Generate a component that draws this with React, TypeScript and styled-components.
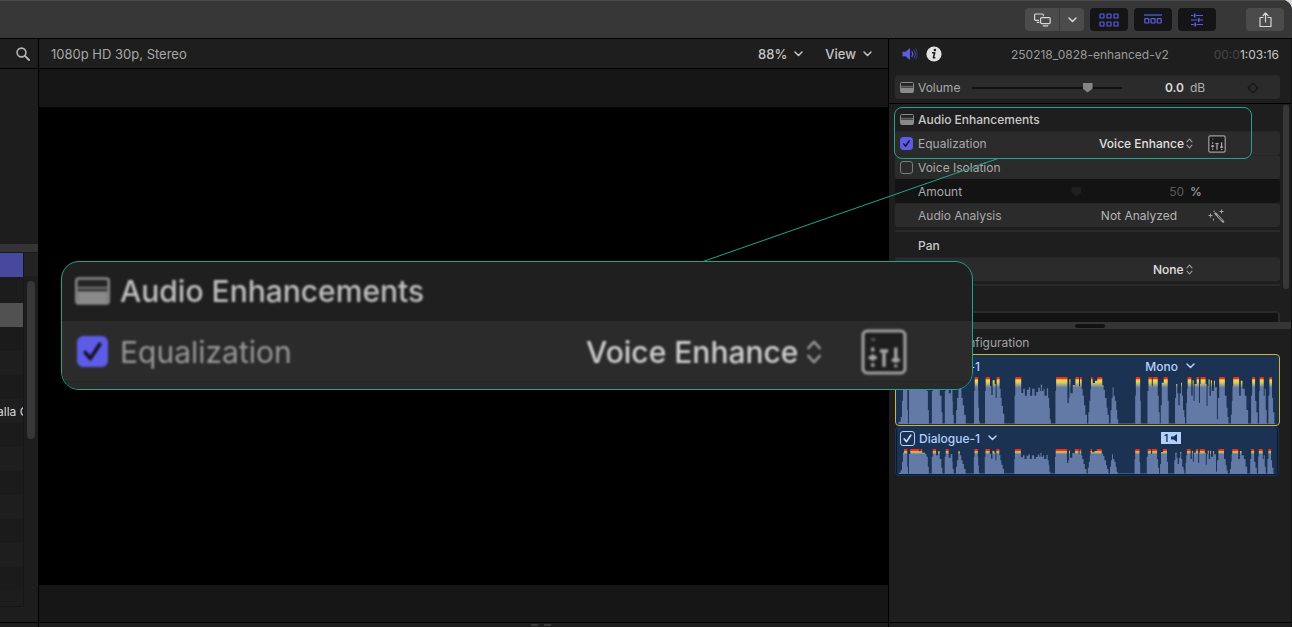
import React from "react";
import styled, { createGlobalStyle, css } from "styled-components";

const ACCENT = "#5e5ce6";
const TEAL = "#1fa58d";
const FONT = 'Inter, "Liberation Sans", sans-serif';

const GlobalStyle = createGlobalStyle`
  *, *::before, *::after { box-sizing: border-box; }
  body { margin: 0; background: #d9d7e2; font-family: ${FONT}; font-size: 12px; color: #b9b9b9; }
  button, input, select { font: inherit; color: inherit; margin: 0; padding: 0; border: 0; background: none; }
  svg { display: block; flex: none; }
`;

/* ---------- window frame ---------- */

const Window = styled.div`
  position: relative;
  display: flex;
  flex-direction: column;
  min-height: 100vh;
  overflow: hidden;
  background: #1e1e1e;
  border-top-right-radius: 10px;
`;

const Toolbar = styled.header`
  display: flex;
  align-items: center;
  justify-content: flex-end;
  gap: 6px;
  height: 39px;
  padding: 0 8px;
  background: #373737;
  border-top: 1px solid #4c4c4c;
  border-bottom: 1px solid #000;
`;

const ToolButton = styled.button<{ $active?: boolean; $width?: number }>`
  display: flex;
  align-items: center;
  justify-content: center;
  width: ${(p) => p.$width ?? 38}px;
  height: 23px;
  border-radius: 4px;
  color: ${(p) => (p.$active ? ACCENT : "#d6d6d6")};
  background: ${(p) => (p.$active ? "#151517" : "#4b4b4b")};
`;

const ButtonGroup = styled.div`
  display: flex;
  gap: 1px;
  border-radius: 4px;
  overflow: hidden;
  background: #3a3a3a;

  ${ToolButton} { border-radius: 0; }
`;

const ShareSlot = styled.div`
  margin-left: 24px;
`;

const Body = styled.div`
  flex: 1;
  display: flex;
`;

const PaneHeader = styled.div`
  display: flex;
  align-items: center;
  height: 30px;
  border-bottom: 1px solid #000;
  background: #1e1e1e;
`;

const Footer = styled.div`
  height: 5px;
  border-top: 1px solid #000;
  background: #1e1e1e;
`;

/* ---------- browser sliver on the left ---------- */

const Browser = styled.aside`
  display: flex;
  flex-direction: column;
  flex: none;
  width: 39px;
  border-right: 1px solid #000;
  background: #1d1d1d;
`;

const SearchHeader = styled(PaneHeader)`
  justify-content: flex-end;
  padding-right: 7px;
`;

const IconButton = styled.button`
  display: flex;
  align-items: center;
  justify-content: center;
`;

const Filmstrip = styled.div`
  height: 175px;
`;

const Splitter = styled.div`
  height: 9px;
  border-bottom: 1px solid #1a1a1a;
  background: #343434;
`;

const ListArea = styled.div`
  flex: 1;
  display: flex;
  padding-bottom: 15px;
`;

const List = styled.div`
  width: 24px;
  overflow: hidden;
  border-right: 1px solid #161616;
  border-bottom: 1px solid #161616;
`;

const ListRow = styled.div<{ $tone?: string }>`
  height: 24px;
  line-height: 26px;
  text-indent: -3px;
  white-space: nowrap;
  color: #d8d8d8;
  background: #1b1b1b;

  &:nth-child(odd) { background: #1e1e1e; }

  ${(p) => p.$tone && css`&&& { background: ${p.$tone}; }`}
`;

const ListGap = styled.div`
  height: 26px;
  background: #1c1c1c;
`;

const ListScroll = styled.div`
  flex: 1;
  padding: 5px 0 0 3px;
  border-top: 23px solid #232323;
`;

const ScrollThumb = styled.div<{ $width: number; $height: number }>`
  width: ${(p) => p.$width}px;
  height: ${(p) => p.$height}px;
  border-radius: 4px;
  background: #373737;
`;

/* ---------- viewer ---------- */

const Viewer = styled.main`
  flex: 1;
  display: flex;
  flex-direction: column;
  border-right: 1px solid #000;
`;

const ViewerHeader = styled(PaneHeader)`
  gap: 22px;
  padding: 0 16px 0 12px;
`;

const ClipFormat = styled.div`
  flex: 1;
  font-size: 13px;
  color: #a8a8a8;
`;

const MenuButton = styled.button`
  display: flex;
  align-items: center;
  gap: 7px;
  font-size: 13px;
  font-weight: 500;
  color: #c4c4c4;
`;

const Stage = styled.div`
  flex: 1;
  display: flex;
  padding: 38px 0 37px;
  background: #161616;
`;

const Canvas = styled.div`
  flex: 1;
  background: #000;
`;

const ViewerFooter = styled(Footer)`
  display: flex;
  justify-content: center;
  gap: 6px;
  padding: 1px 0 0 154px;
`;

const Tick = styled.span`
  width: 7px;
  height: 2px;
  background: #3a3a3a;
`;

/* ---------- inspector ---------- */

const Inspector = styled.aside`
  position: relative;
  display: flex;
  flex-direction: column;
  flex: none;
  width: 403px;
  border-right: 1px solid #121212;
`;

const InspectorHeader = styled.div`
  display: flex;
  align-items: center;
  gap: 8px;
  height: 30px;
  padding: 0 12px 0 13px;
`;

const ClipName = styled.div`
  flex: 1;
  padding-left: 24px;
  text-align: center;
  color: #9b9b9b;
`;

const TimeCode = styled.div`
  color: #c8c8c8;
  span { color: #454545; }
`;

const VolumeSection = styled.div`
  padding: 6px 11px 4px 6px;
  border-bottom: 1px solid #000;
`;

const ScrollRegion = styled.div`
  display: flex;
  height: 218px;
  overflow: hidden;
`;

const Rows = styled.div`
  flex: 1;
  padding: 3px 3px 0 6px;
`;

const Row = styled.div<{ $tone?: "plain" | "raised" | "sunken" }>`
  display: flex;
  align-items: center;
  height: 24px;
  border-radius: 3px;
  background: ${(p) =>
    p.$tone === "raised" ? "#2b2b2b" : p.$tone === "sunken" ? "#131313" : "transparent"};
  border-top: 1px solid ${(p) => (p.$tone === "raised" ? "#262626" : "transparent")};
`;

const Lead = styled.div`
  width: 23px;
  padding-left: 5px;
`;

const Label = styled.label`
  width: 54px;
  white-space: nowrap;
  color: #a9a9a9;
`;

const Heading = styled.h3`
  margin: 0;
  font-size: 12px;
  font-weight: 500;
  color: #c9c9c9;
`;

const Value = styled.div`
  flex: 1;
  display: flex;
  justify-content: flex-end;
`;

const Unit = styled.div`
  width: 24px;
  padding-left: 6px;
  color: #b0b0b0;
`;

const Action = styled.div`
  display: flex;
  width: 72px;
`;

const KeyframeAction = styled(Action)`
  padding-left: 39px;
`;

const NumberInput = styled.input<{ $dim?: boolean }>`
  width: 36px;
  text-align: right;
  font-weight: ${(p) => (p.$dim ? 400 : 600)};
  color: ${(p) => (p.$dim ? "#5b5b5b" : "#dcdcdc")};
`;

const Range = styled.input<{ $faint?: boolean }>`
  appearance: none;
  width: 150px;
  height: 12px;

  &::-webkit-slider-runnable-track {
    height: 10px;
    background: linear-gradient(${(p) => (p.$faint ? "#131313" : "#111")}, ${(p) => (p.$faint ? "#131313" : "#111")})
      center / 100% 2px no-repeat;
  }
  &::-webkit-slider-thumb {
    appearance: none;
    width: 10px;
    height: 10px;
    background: ${(p) => (p.$faint ? "#1f1f1f" : "#858585")};
    clip-path: polygon(10% 0, 90% 0, 100% 10%, 100% 60%, 50% 100%, 0 60%, 0 10%);
  }
`;

const Popup = styled.div<{ $large?: boolean }>`
  display: flex;
  align-items: center;
  gap: ${(p) => (p.$large ? 7 : 2)}px;
  margin-right: ${(p) => (p.$large ? 39 : 15)}px;
  color: ${(p) => (p.$large ? "#999" : "#a0a0a0")};

  select {
    appearance: none;
    font-weight: 500;
    color: ${(p) => (p.$large ? "#d0d0d0" : "#e0e0e0")};
  }
`;

const Status = styled.div`
  margin-right: 31px;
  color: #b4b4b4;
`;

const Divider = styled.hr`
  height: 2px;
  margin: 3px 0 1px;
  border: 0;
  background: #2a2a2a;
`;

const NextBox = styled.div`
  height: 30px;
  margin-top: 25px;
  border: 2px solid #2a2a2a;
  border-radius: 4px;
  background: #131313;
`;

const checkMark = (stroke: string, fill: string) =>
  `url("data:image/svg+xml,${encodeURIComponent(
    `<svg xmlns='http://www.w3.org/2000/svg' viewBox='0 0 12 12'><rect width='12' height='12' fill='${fill}'/><path d='M3 6.4 5.1 8.9 9 3' fill='none' stroke='${stroke}' stroke-width='1.6' stroke-linecap='round' stroke-linejoin='round'/></svg>`
  )}")`;

const Check = styled.input<{ $size?: number; $track?: boolean }>`
  appearance: none;
  display: block;
  flex: none;
  width: ${(p) => p.$size ?? 13}px;
  height: ${(p) => p.$size ?? 13}px;
  border: 1px solid ${(p) => (p.$track ? "#b5d0fa" : "#7b7b7b")};
  border-radius: ${(p) => ((p.$size ?? 13) > 20 ? 6 : 3)}px;

  &:checked {
    background: ${(p) => (p.$track ? checkMark("#c4dafc", "#1b3253") : checkMark("#15152a", ACCENT))} center / 100% 100%;
    ${(p) => !p.$track && css`border-color: ${ACCENT};`}
  }
`;

const ScrollGutter = styled.div`
  width: 8px;
  padding-top: 1px;
`;

const PaneSplitter = styled.div`
  display: flex;
  align-items: center;
  justify-content: center;
  height: 7px;
  background: #353535;

  &::after {
    content: "";
    width: 30px;
    height: 4px;
    border-radius: 2px;
    background: #121212;
  }
`;

const ConfigArea = styled.section`
  flex: 1;
  padding: 0 11px 0 6px;
`;

const ConfigTitle = styled.div`
  height: 25px;
  padding-left: 21px;
  line-height: 27px;
  color: #a3a3a3;
`;

const Track = styled.div<{ $selected?: boolean }>`
  border: 1px solid ${(p) => (p.$selected ? "#c8b637" : "#1b3253")};
  border-radius: 4px;
  background: #1b3253;
  ${(p) => !p.$selected && css`
    margin-right: 1px;
    box-shadow: inset 1px -1px 0 #0a1930, inset -1px 0 0 #0a1930;
  `}
`;

const TrackHead = styled.div`
  display: flex;
  align-items: center;
  gap: 4px;
  height: 22px;
  padding: 0 84px 0 4px;
  color: #b5d0fa;

  label { flex: none; font-weight: 500; }
  ${MenuButton} { gap: 8px; padding-left: 4px; font-size: 12px; color: #b5d0fa; }
`;

const TrackSpacer = styled.div`
  flex: 1;
`;

const OutputBadge = styled.div`
  display: flex;
  align-items: center;
  justify-content: center;
  gap: 3px;
  width: 20px;
  height: 12px;
  margin-right: 13px;
  font-size: 10px;
  font-weight: 600;
  color: #1b3253;
  background: #b5d0fa;
`;

/* ---------- annotation overlay ---------- */

const Highlight = styled.div`
  position: absolute;
  top: 68px;
  left: 5px;
  width: 358px;
  height: 52px;
  border: 1px solid ${TEAL};
  border-radius: 8px;
  pointer-events: none;
`;

const Connector = styled.svg`
  position: absolute;
  top: 158px;
  right: 293px;
`;

const Magnifier = styled.section`
  position: absolute;
  top: 261px;
  right: 319px;
  width: 912px;
  overflow: hidden;
  border: 1px solid ${TEAL};
  border-radius: 18px;
  background: #1f1f1f;
`;

const BigRow = styled.div<{ $raised?: boolean }>`
  display: flex;
  align-items: center;
  height: ${(p) => (p.$raised ? 60 : 59)}px;
  padding: ${(p) => (p.$raised ? "1px 65px 0 13px" : "0 65px 2px 13px")};
  font-size: 30px;
  font-weight: 500;
  color: #c0c0c0;
  background: ${(p) => (p.$raised ? "#2b2b2b" : "transparent")};

  > * { filter: blur(1px); }
  label { flex: 1; font-weight: 400; color: #999; }
  h2 { margin: 0; font-size: inherit; font-weight: 500; }
`;

const BigLead = styled.div<{ $inset?: boolean }>`
  width: 45px;
  padding-left: ${(p) => (p.$inset ? 2 : 0)}px;
`;

const BigFoot = styled.div`
  height: 8px;
  border-top: 1px solid #252525;
  background: #292929;
`;

/* ---------- icons ---------- */

const Chevron = () => (
  <svg width="9" height="6" viewBox="0 0 9 6" fill="none" stroke="currentColor" strokeWidth="1.5" strokeLinecap="round" strokeLinejoin="round">
    <path d="M1 1l3.5 3.5L8 1" />
  </svg>
);

const UpDown = ({ large }: { large?: boolean }) => (
  <svg width={large ? 16 : 7} height={large ? 28 : 11} viewBox="0 0 7 11" fill="none" stroke="currentColor" strokeWidth="1.1" strokeLinecap="round" strokeLinejoin="round">
    <path d="M1 3.8 3.5 1 6 3.8M1 7.2 3.5 10 6 7.2" />
  </svg>
);

const Panel = ({ large }: { large?: boolean }) => (
  <svg width={large ? 35 : 14} height={large ? 28 : 11} viewBox="0 0 14 11">
    <rect x=".5" y=".5" width="13" height="10" rx="1" fill="#242424" stroke="#8a8a8a" />
    <path d="M1 4.3h12" stroke="#6f6f6f" />
    <path d="M1 5.6h12v4.7H1z" fill="#8a8a8a" />
  </svg>
);

const EqIcon = ({ large }: { large?: boolean }) => (
  <svg width={large ? 46 : 18} height={large ? 46 : 18} viewBox="0 0 18 18" fill="none">
    <rect x=".8" y=".8" width="16.4" height="16.4" rx="1.6" fill="#1e1e1e" stroke="#a0a0a0" strokeWidth="1.2" />
    <path d="M4 4.1h1.6" stroke="#555" strokeWidth="1.2" />
    <g stroke="#a8a8a8" strokeWidth="1.3">
      <path d="M4.6 7.2v1.6M4.6 10v2.4M4.6 13.4v1.4M9 9.2v5.6M13.6 7.2v6M13.6 14v1" />
      <path d="M3 11.2h3.2M7.4 8.6h3.2M12 12.2h3.2" />
    </g>
  </svg>
);

const Monitors = () => (
  <svg width="17" height="14" viewBox="0 0 17 14" fill="none" stroke="currentColor" strokeWidth="1.2">
    <path d="M5 7.4H1.6A1 1 0 0 1 .6 6.4V2A1 1 0 0 1 1.6 1h6.8a1 1 0 0 1 1 1v1.2M2.8 9.4H5.5" />
    <rect x="6.6" y="4.6" width="9.6" height="6" rx="1" />
    <path d="M8.8 12.8h5.4" />
  </svg>
);

const GridIcon = () => (
  <svg width="20" height="14" viewBox="0 0 20 14" fill="none" stroke="currentColor" strokeWidth="1.2">
    {[1, 8, 15].map((x) => [1, 9].map((y) => <rect key={`${x}-${y}`} x={x} y={y} width="4" height="4" rx=".6" />))}
  </svg>
);

const TimelineIcon = () => (
  <svg width="18" height="11" viewBox="0 0 18 11" fill="none" stroke="currentColor" strokeWidth="1.2">
    <path d="M0 1h18" />
    {[0.8, 7, 13.2].map((x) => <rect key={x} x={x} y="4.6" width="4" height="4.4" rx=".5" />)}
  </svg>
);

const SlidersIcon = () => (
  <svg width="14" height="14" viewBox="0 0 14 14" fill="none" stroke="currentColor" strokeWidth="1.2">
    <path d="M1 2.5h2.5M6 2.5h7M1 7h6.5M10 7h3M1 11.5h3M6.5 11.5h6.5" />
    <path d="M4.7 .5v4M8.8 5v4M5.2 9.5v4" strokeWidth="1.6" />
  </svg>
);

const Share = () => (
  <svg width="13" height="16" viewBox="0 0 13 16" fill="none" stroke="currentColor" strokeWidth="1.2" strokeLinecap="round" strokeLinejoin="round">
    <path d="M4 5.500H1v9h11v-9H9M6.500 10V1M4 3.500 6.500 1 9 3.500" />
  </svg>
);

const Search = () => (
  <svg width="16" height="16" viewBox="0 0 16 16" fill="none" stroke="#b5b5b5" strokeLinecap="round">
    <circle cx="6.5" cy="6.5" r="4.4" strokeWidth="1.6" />
    <path d="M9.9 9.9 14 14" strokeWidth="2" />
  </svg>
);

const Speaker = () => (
  <svg width="16" height="14" viewBox="0 0 16 14">
    <path d="M.5 4.700H3.500L8 1v12L3.500 9.300H.500z" fill={ACCENT} />
    <g fill="none" stroke={ACCENT} strokeLinecap="round">
      <path d="M10 4.600q1.600 2.400 0 4.800" strokeWidth="1.3" />
      <path d="M12 3q3 4 0 8" opacity=".7" />
      <path d="M13.800 1.600q3 5.400 0 10.800" opacity=".4" />
    </g>
  </svg>
);

const Info = () => (
  <svg width="16" height="16" viewBox="0 0 16 16">
    <circle cx="8" cy="8" r="7.6" fill="#e2e2e2" />
    <circle cx="8.9" cy="4" r="1.3" fill="#1e1e1e" />
    <path d="M6 6.800h2.700l-1.300 5h1.900" fill="none" stroke="#1e1e1e" strokeWidth="1.6" strokeLinejoin="round" />
  </svg>
);

const Diamond = () => (
  <svg width="12" height="12" viewBox="0 0 12 12" fill="none" stroke="#151515" strokeWidth="1.2">
    <path d="M6 1l5 5-5 5-5-5z" />
  </svg>
);

const Wand = () => (
  <svg width="17" height="14" viewBox="0 0 17 14" fill="none" stroke="#a4a4a4">
    <path d="M7.500 4.500 15 12.500" strokeWidth="2.4" strokeLinecap="round" />
    <path d="M9.500 6.500l5 5.300" stroke="#2b2b2b" strokeWidth=".8" />
    <path d="M.500 6.500h4M2.500 4.500v4M11.500 2.500h4M13.500 .500v4M6 1.500v1.500M5.500 9.500v2" strokeWidth="1" />
  </svg>
);

const SmallSpeaker = () => (
  <svg width="7" height="8" viewBox="0 0 7 8" fill="currentColor">
    <path d="M0 2.500h2.500L6 0v8L2.500 5.500H0z" />
  </svg>
);

/* ---------- waveform ---------- */

// Each phrase is a run of [x, level] samples; level 1 clips at the top.
const PHRASES: [number, number][][] = [
  [[8, .05], [14, .15], [18, .5], [21, .85], [24, 1], [32, 1], [34, .3], [36, 0]],
  [[38, 0], [39, .8], [43, 1], [66, 1], [70, .9], [74, 1], [79, .86], [88, .8], [92, .7], [96, .3], [99, 0]],
  [[106, 0], [108, .7], [111, 1], [119, 1], [121, .75], [127, .9], [132, .6], [137, .25], [140, 0]],
  [[145, 0], [147, .7], [150, 1], [157, 1], [159, .65], [165, .8], [170, .5], [171, .2], [174, 0]],
  [[178, 0], [181, .3], [184, .55], [188, .9], [193, .75], [197, .55], [201, .4], [205, .2], [210, 0]],
  [[233, 0], [235, .7], [237, 1], [246, 1], [247, .7], [248, .35], [250, .06], [252, 0]],
  [[266, 0], [268, .7], [270, 1], [280, 1], [283, .8], [287, .62], [291, .93], [297, .85], [300, .55], [303, 1], [310, 1], [312, .75], [315, .55], [318, .38], [322, .22], [326, 0]],
  [[356, 0], [357, .6], [359, 1], [375, 1], [377, .66], [383, .75], [388, .6], [394, .73], [400, .78], [404, .6], [410, .75], [417, .6], [422, .68], [428, .77], [433, .7], [436, .84], [439, .7], [444, .75], [447, .6], [454, .76], [458, .55], [461, .35], [463, .1], [466, 0]],
  [[479, 0], [480, .7], [482, 1], [515, 1], [516, .45], [520, .55], [522, .96], [525, .65], [532, .83], [539, .8], [540, 1], [549, 1], [551, .8], [554, 1], [557, 1], [559, .75], [562, .6], [566, .4], [570, .2], [575, 0]],
  [[577, 0], [579, .25], [582, .5], [585, .75], [587, 1], [592, .87], [599, .92], [606, 1], [619, 1], [621, .82], [625, .72], [629, .55], [634, .35], [637, .2], [641, 0]],
  [[642, 0], [646, .3], [649, .55], [652, .78], [655, .6], [659, .5], [663, .3], [666, .1], [669, 0]],
  [[719, 0], [720, .6], [722, 1], [734, 1], [735, .5], [737, 0]],
  [[755, 0], [757, .7], [760, 1], [768, 1], [770, .8], [773, 1], [787, 1], [788, .6], [791, .25], [794, 0]],
  [[795, 0], [797, .4], [800, .88], [806, 1], [816, 1], [818, .5], [821, 0]],
  [[838, 0], [840, .55], [843, .85], [847, .65], [850, .4], [854, .65], [858, .88], [861, .6], [864, .3], [868, .15], [870, 0]],
  [[872, 0], [874, .45], [876, .75], [878, 1], [887, 1], [889, .6], [893, .93], [896, .5], [899, .85], [905, 1], [911, 1], [912, .45], [915, .85], [917, 1], [930, 1], [932, .85], [935, .38], [938, .8], [941, .95], [944, .6], [948, .93], [951, .7], [957, .92], [960, .78], [966, .1], [969, .55], [973, 1], [988, 1], [990, .6], [995, .35], [998, .15], [1001, 0]],
  [[1005, 0], [1008, .2], [1011, .5], [1013, .8], [1015, 1], [1031, 1], [1033, .6], [1038, .92], [1043, .75], [1050, .6], [1055, .3], [1060, 0]],
  [[1067, 0], [1069, .6], [1072, 1], [1079, 1], [1081, .5], [1085, .25], [1089, 0]],
  [[1091, 0], [1093, .7], [1095, 1], [1104, 1], [1107, .6], [1110, .75], [1113, .3], [1116, 0]],
  [[1119, 0], [1121, .6], [1124, 1], [1130, 1], [1132, .55], [1135, .25], [1139, 0]],
];

const stepPath = (points: [number, number][], height: number) => {
  let d = `M${points[0][0]} ${height}`;
  for (const [x, level] of points) d += `H${x}V${Math.round(height * (1 - level))}`;
  return `${d}V${height}Z`;
};

const WaveSvg = styled.svg<{ $height: number }>`
  width: 100%;
  height: ${(p) => p.$height}px;
  margin-bottom: 1px;
`;

const Waveform = ({ id, height }: { id: string; height: number }) => {
  const h = height * 3;
  const tall = h > 100;
  return (
    <WaveSvg $height={height} viewBox={`0 0 1153 ${h}`} preserveAspectRatio="none" aria-hidden>
      <defs>
        <linearGradient id={id} gradientUnits="userSpaceOnUse" x1="0" y1="0" x2="0" y2={tall ? 32 : 16}>
          <stop offset="0" stopColor="#f0281c" />
          <stop offset={tall ? ".2" : ".4"} stopColor="#f0381c" />
          <stop offset={tall ? ".25" : ".5"} stopColor="#f6d84a" />
          <stop offset=".5" stopColor="#d9cf62" />
          <stop offset="1" stopColor="#627aa5" />
        </linearGradient>
      </defs>
      <path d={`M8 ${h - 2}H1142V${h}H8Z`} fill="#4c6490" />
      {PHRASES.map((p) => (
        <path key={p[0][0]} d={stepPath(p, h)} fill={`url(#${id})`} />
      ))}
    </WaveSvg>
  );
};

/* ---------- page ---------- */

const BROWSER_ROWS = 11;

export default function App() {
  return (
    <Window>
      <GlobalStyle />
      <Toolbar>
        <ButtonGroup>
          <ToolButton $width={34} aria-label="Displays"><Monitors /></ToolButton>
          <ToolButton $width={24} aria-label="Display options"><Chevron /></ToolButton>
        </ButtonGroup>
        <ToolButton $active aria-label="Browser"><GridIcon /></ToolButton>
        <ToolButton $active aria-label="Timeline"><TimelineIcon /></ToolButton>
        <ToolButton $active aria-label="Inspector"><SlidersIcon /></ToolButton>
        <ShareSlot>
          <ToolButton aria-label="Share"><Share /></ToolButton>
        </ShareSlot>
      </Toolbar>

      <Body>
        <Browser>
          <SearchHeader>
            <IconButton aria-label="Search"><Search /></IconButton>
          </SearchHeader>
          <Filmstrip />
          <Splitter />
          <ListArea>
            <List>
              <ListRow $tone="#474a9c" />
              <ListGap />
              <ListRow $tone="#515151" />
              {Array.from({ length: BROWSER_ROWS }, (_, i) => (
                <ListRow key={i}>{i === 3 ? "alla C" : null}</ListRow>
              ))}
            </List>
            <ListScroll><ScrollThumb $width={8} $height={158} /></ListScroll>
          </ListArea>
          <Footer />
        </Browser>

        <Viewer>
          <ViewerHeader>
            <ClipFormat>1080p HD 30p, Stereo</ClipFormat>
            <MenuButton>88% <Chevron /></MenuButton>
            <MenuButton>View <Chevron /></MenuButton>
          </ViewerHeader>
          <Stage><Canvas /></Stage>
          <ViewerFooter><Tick /><Tick /></ViewerFooter>
        </Viewer>

        <Inspector>
          <InspectorHeader>
            <IconButton aria-label="Audio"><Speaker /></IconButton>
            <IconButton aria-label="Info"><Info /></IconButton>
            <ClipName>250218_0828-enhanced-v2</ClipName>
            <TimeCode><span>00:0</span>1:03:16</TimeCode>
          </InspectorHeader>

          <VolumeSection>
            <Row $tone="raised">
              <Lead><Panel /></Lead>
              <Label htmlFor="volume">Volume</Label>
              <Range id="volume" type="range" defaultValue={79} />
              <Value><NumberInput aria-label="Volume level" defaultValue="0.0" /></Value>
              <Unit>dB</Unit>
              <KeyframeAction><IconButton aria-label="Add keyframe"><Diamond /></IconButton></KeyframeAction>
            </Row>
          </VolumeSection>

          <ScrollRegion>
            <Rows>
              <Row>
                <Lead><Panel /></Lead>
                <Heading>Audio Enhancements</Heading>
              </Row>
              <Row $tone="raised">
                <Lead><Check id="eq" type="checkbox" defaultChecked /></Lead>
                <Label htmlFor="eq">Equalization</Label>
                <Value>
                  <Popup>
                    <select aria-label="Equalization preset"><option>Voice Enhance</option></select>
                    <UpDown />
                  </Popup>
                </Value>
                <Action><IconButton aria-label="Show equalizer"><EqIcon /></IconButton></Action>
              </Row>
              <Row $tone="raised">
                <Lead><Check id="isolation" type="checkbox" /></Lead>
                <Label htmlFor="isolation">Voice Isolation</Label>
              </Row>
              <Row $tone="sunken">
                <Lead />
                <Label htmlFor="amount">Amount</Label>
                <Range id="amount" type="range" defaultValue={71} $faint />
                <Value><NumberInput aria-label="Amount value" defaultValue="50" $dim /></Value>
                <Unit>%</Unit>
                <Action />
              </Row>
              <Row $tone="raised">
                <Lead />
                <Label as="div">Audio Analysis</Label>
                <Value><Status>Not Analyzed</Status></Value>
                <Action><IconButton aria-label="Analyze"><Wand /></IconButton></Action>
              </Row>
              <Divider />
              <Row>
                <Lead />
                <Heading>Pan</Heading>
              </Row>
              <Row $tone="raised">
                <Value>
                  <Popup>
                    <select aria-label="Pan mode"><option>None</option></select>
                    <UpDown />
                  </Popup>
                </Value>
                <Action />
              </Row>
              <Divider />
              <NextBox />
            </Rows>
            <ScrollGutter><ScrollThumb $width={6} $height={184} /></ScrollGutter>
          </ScrollRegion>

          <PaneSplitter />

          <ConfigArea>
            <ConfigTitle>Audio Configuration</ConfigTitle>
            <Track $selected>
              <TrackHead>
                <Check id="track-a" type="checkbox" defaultChecked $size={15} $track />
                <label htmlFor="track-a">Dialogue-1</label>
                <TrackSpacer />
                <MenuButton>Mono <Chevron /></MenuButton>
              </TrackHead>
              <Waveform id="wave-a" height={47} />
            </Track>
            <Track>
              <TrackHead>
                <Check id="track-b" type="checkbox" defaultChecked $size={15} $track />
                <label htmlFor="track-b">Dialogue-1</label>
                <MenuButton aria-label="Role options"><Chevron /></MenuButton>
                <TrackSpacer />
                <OutputBadge>1<SmallSpeaker /></OutputBadge>
              </TrackHead>
              <Waveform id="wave-b" height={25} />
            </Track>
          </ConfigArea>
          <Footer />
          <Highlight />
        </Inspector>
      </Body>

      <Connector width="297" height="104" viewBox="0 0 297 104">
        <path d="M1 103.500 296 .500" stroke={TEAL} />
      </Connector>

      <Magnifier>
        <BigRow>
          <BigLead><Panel large /></BigLead>
          <h2>Audio Enhancements</h2>
        </BigRow>
        <BigRow $raised>
          <BigLead $inset><Check id="eq-large" type="checkbox" defaultChecked $size={31} /></BigLead>
          <label htmlFor="eq-large">Equalization</label>
          <Popup $large>
            <select aria-label="Preset"><option>Voice Enhance</option></select>
            <UpDown large />
          </Popup>
          <IconButton aria-label="Equalizer"><EqIcon large /></IconButton>
        </BigRow>
        <BigFoot />
      </Magnifier>
    </Window>
  );
}
